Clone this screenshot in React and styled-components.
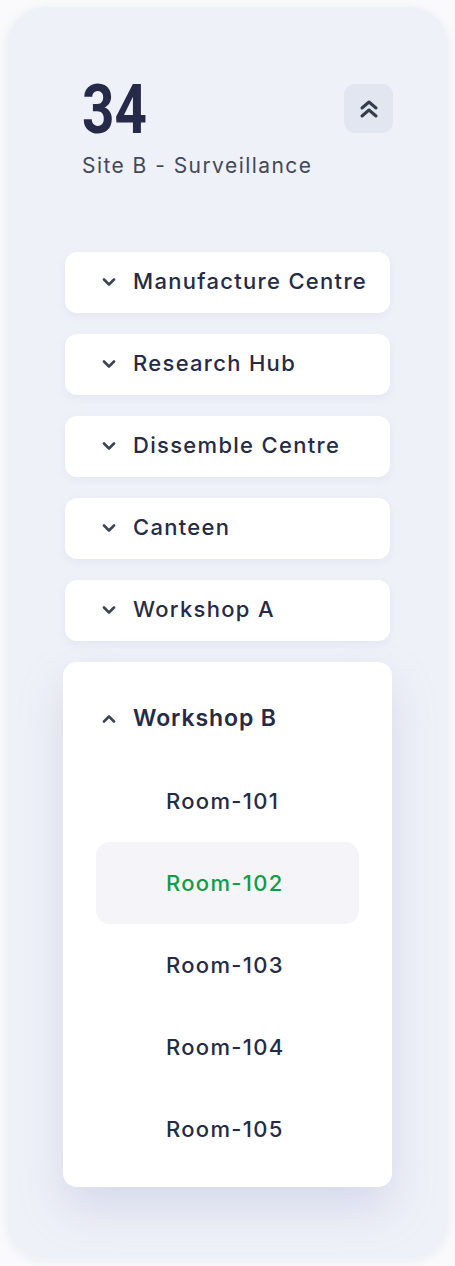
import React from 'react';
import styled, { createGlobalStyle } from 'styled-components';

const GlobalStyle = createGlobalStyle`
  body {
    margin: 0;
    background: #fafafc;
    font-family: Inter, "Noto Sans", sans-serif;
    -webkit-font-smoothing: antialiased;
  }
`;

const Panel = styled.div`
  box-sizing: border-box;
  margin: 6px;
  width: 443px;
  height: 1254px;
  border-radius: 40px;
  background: #eff1f8;
  border: 1px solid #f4f5fa;
  box-shadow: 0 2px 10px rgba(170, 176, 205, 0.18);
  padding: 0 58px 0 58px;
`;

const Header = styled.div`
  display: flex;
  justify-content: space-between;
  align-items: flex-start;
  padding: 63px 0 0 17px;
  height: 245px;
  box-sizing: border-box;
`;

const Count = styled.div`
  display: inline-block;
  font-family: Roboto, "Liberation Sans", sans-serif;
  font-weight: 700;
  font-size: 69px;
  line-height: 80px;
  color: #262a48;
  transform: scaleX(0.82);
  transform-origin: left center;
`;

const Subtitle = styled.div`
  margin-top: 3px;
  font-size: 21px;
  letter-spacing: 1.45px;
  color: #414859;
`;

const CollapseButton = styled.button`
  width: 49px;
  height: 49px;
  margin-top: 14px;
  margin-right: -3px;
  border: none;
  border-radius: 11px;
  background: #e2e6f0;
  display: flex;
  align-items: center;
  justify-content: center;
  padding: 0;
`;

const List = styled.div`
  display: flex;
  flex-direction: column;
  gap: 21px;
`;

const Item = styled.div`
  box-sizing: border-box;
  height: 61px;
  border-radius: 12px;
  background: #ffffff;
  box-shadow: 0 3px 8px rgba(180, 186, 210, 0.18);
  display: flex;
  align-items: center;
  padding: 0 0 3px 37px;
  gap: 17px;
  font-size: 22px;
  letter-spacing: 1.3px;
  font-weight: 450;
  color: #262b45;

  svg {
    margin-top: 3px;
  }
`;

const Expanded = styled.div`
  margin: 0 -2px;
  border-radius: 14px;
  background: #ffffff;
  box-shadow: 0 22px 44px rgba(150, 158, 200, 0.28);
  padding: 40px 33px 17px;
`;

const ExpandedHead = styled.div`
  display: flex;
  align-items: center;
  gap: 17px;
  padding-left: 6px;
  height: 32px;
  margin-bottom: 26px;
  font-size: 23px;
  letter-spacing: 0.9px;
  font-weight: 560;
  color: #262b45;
`;

const Room = styled.div`
  height: 82px;
  border-radius: 14px;
  display: flex;
  align-items: center;
  padding-left: 70px;
  font-size: 22px;
  letter-spacing: 1.3px;
  font-weight: 450;
  color: ${({ active }) => (active ? '#0f9d45' : '#262b45')};
  background: ${({ active }) => (active ? '#f4f4f9' : 'transparent')};
`;

const Chevron = ({ up }) => (
  <svg width="14" height="9" viewBox="0 0 14 9">
    <path
      d={up ? 'M2 7.5 L7 2.5 L12 7.5' : 'M2 1.5 L7 6.5 L12 1.5'}
      fill="none"
      stroke="#3d4452"
      strokeWidth="2.6"
      strokeLinecap="round"
      strokeLinejoin="round"
    />
  </svg>
);

const DoubleUp = () => (
  <svg width="20" height="22" viewBox="0 0 20 22">
    <g fill="none" stroke="#363c4b" strokeWidth="3" strokeLinecap="round" strokeLinejoin="round">
      <path d="M3 10 L10 4 L17 10" />
      <path d="M3 18 L10 12 L17 18" />
    </g>
  </svg>
);

const sites = ['Manufacture Centre', 'Research Hub', 'Dissemble Centre', 'Canteen', 'Workshop A'];
const rooms = ['Room-101', 'Room-102', 'Room-103', 'Room-104', 'Room-105'];

export default function App() {
  return (
    <>
      <GlobalStyle />
      <Panel>
        <Header>
          <div>
            <Count>34</Count>
            <Subtitle>Site B - Surveillance</Subtitle>
          </div>
          <CollapseButton>
            <DoubleUp />
          </CollapseButton>
        </Header>
        <List>
          {sites.map((s) => (
            <Item key={s}>
              <Chevron />
              {s}
            </Item>
          ))}
          <Expanded>
            <ExpandedHead>
              <Chevron up />
              Workshop B
            </ExpandedHead>
            {rooms.map((r) => (
              <Room key={r} active={r === 'Room-102'}>
                {r}
              </Room>
            ))}
          </Expanded>
        </List>
      </Panel>
    </>
  );
}
